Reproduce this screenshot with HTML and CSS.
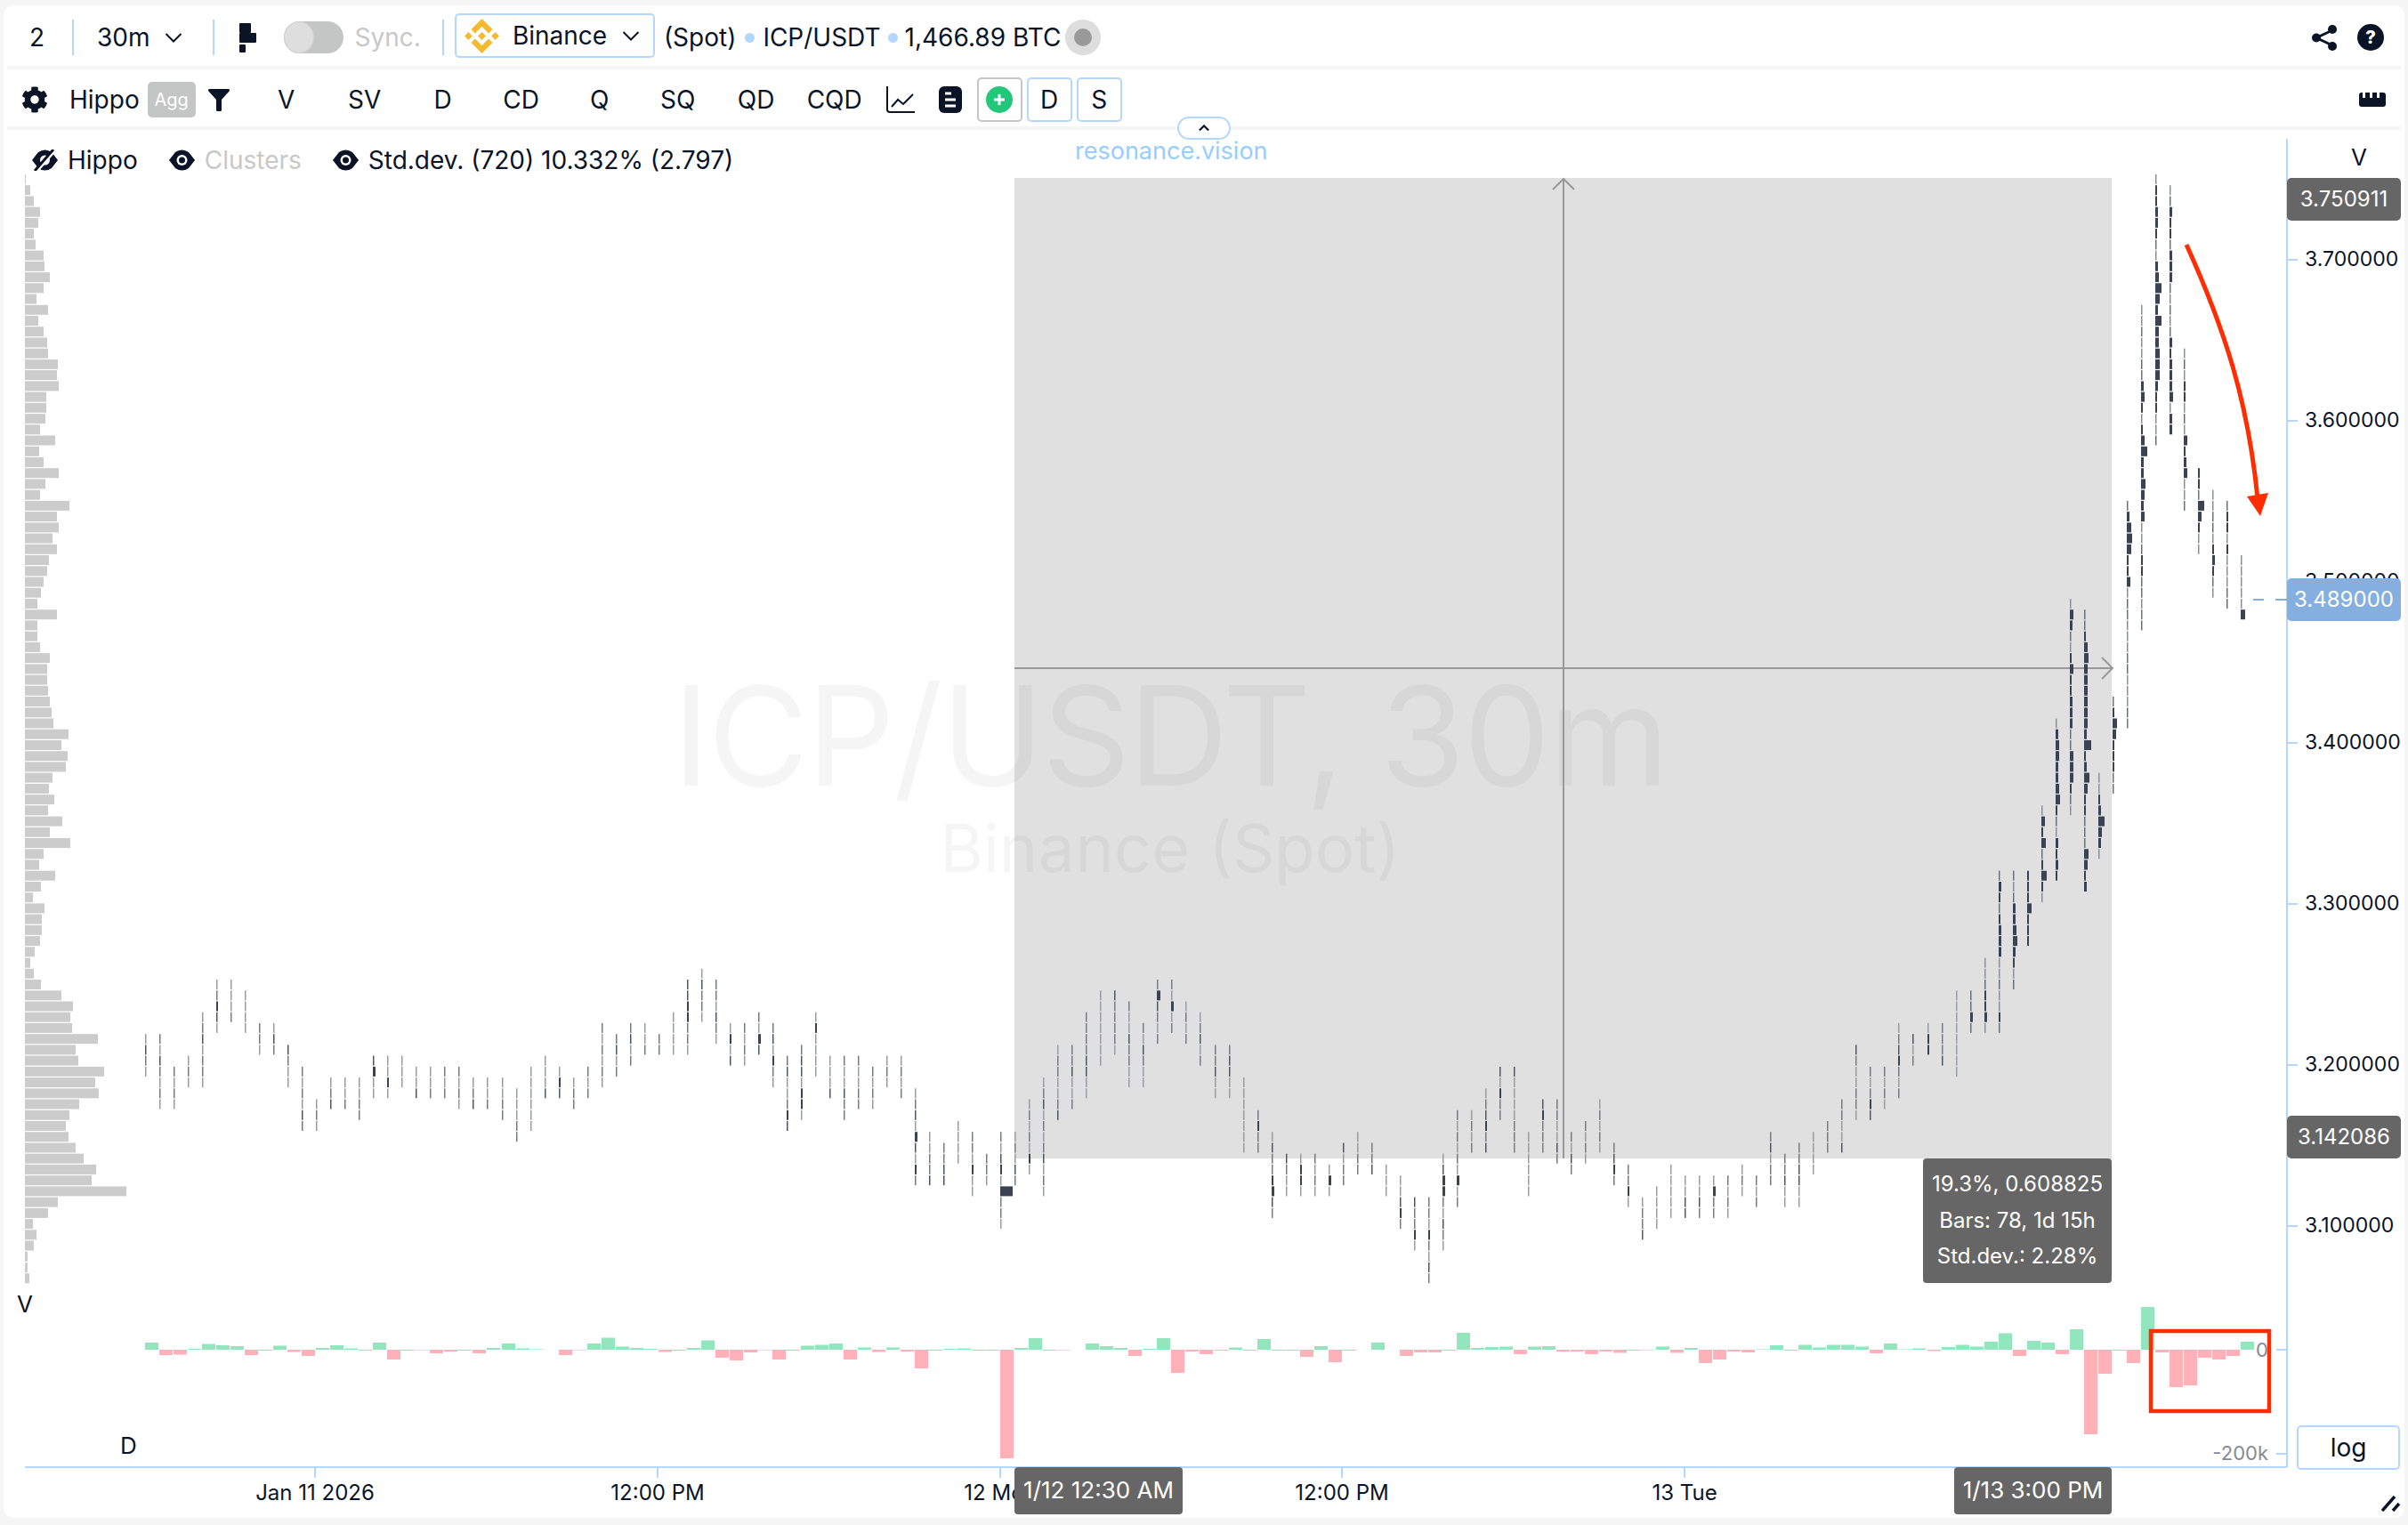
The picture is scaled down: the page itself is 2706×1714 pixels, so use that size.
FILE: index.html
```html
<!DOCTYPE html>
<html>
  <head>
    <meta charset="utf-8">
    <title>ICP/USDT</title>
    <link rel="stylesheet" href="styles.css">
  </head>
  <body>
  <main class="card">
    <section class="toolbar toolbar-top">
      <span class="count">2</span>
      <i class="divider divider-a"></i>
      <span class="interval">30m</span>
      <svg class="chevron" viewBox="0 0 19 11"><path d="M1 1l8.5 8.5L18 1"/></svg>
      <i class="divider divider-b"></i>
      <svg class="layout-icon" viewBox="0 0 19 33"><rect width="13" height="11" rx="1"/><rect y="11" width="19" height="11" rx="1"/><rect y="24" width="7" height="9" rx="1"/></svg>
      <span class="toggle"><i></i></span>
      <span class="sync">Sync.</span>
      <i class="divider divider-c"></i>
      <div class="exchange">
        <svg class="binance" viewBox="0 0 126.61 126.61"><path d="M38.73 53.2l24.59-24.58 24.6 24.6 14.3-14.31L63.32 0 24.43 38.9zM0 63.31l14.3-14.31 14.31 14.31-14.31 14.3zM38.73 73.41l24.59 24.59 24.6-24.6 14.31 14.29-38.9 38.91-38.91-38.88-.02-.02zM98 63.31l14.3-14.3 14.31 14.3-14.31 14.31zM77.83 63.3L63.32 48.78 52.59 59.51l-1.24 1.23-2.54 2.54 14.51 14.5 14.51-14.47z"/></svg>
        <span>Binance</span>
        <svg class="chevron" viewBox="0 0 19 11"><path d="M1 1l8.5 8.5L18 1"/></svg>
      </div>
      <span class="spot">(Spot)</span>
      <i class="dot dot-a"></i>
      <span class="pair">ICP/USDT</span>
      <i class="dot dot-b"></i>
      <span class="volume">1,466.89 BTC</span>
      <span class="status"><i></i></span>
      <svg class="share" viewBox="0 0 28 29"><path d="M23 6L5 14.500L23 23"/><circle cx="5" cy="14.500" r="5"/><circle cx="23" cy="5" r="5"/><circle cx="23" cy="24" r="5"/></svg>
      <span class="help">?</span>
    </section>

    <section class="toolbar toolbar-second">
      <svg class="gear" viewBox="0 0 512 512"><path d="M487.4 315.7l-42.6-24.6c4.3-23.2 4.3-47 0-70.2l42.6-24.6c4.9-2.8 7.1-8.6 5.5-14-11.1-35.6-30-67.8-54.7-94.6-3.8-4.1-10-5.1-14.8-2.3L380.8 110c-17.9-15.4-38.5-27.3-60.8-35.1V25.8c0-5.6-3.9-10.5-9.4-11.7-36.7-8.2-74.3-7.8-109.2 0-5.5 1.2-9.4 6.1-9.4 11.7V75c-22.2 7.9-42.8 19.8-60.8 35.1L88.7 85.5c-4.9-2.8-11-1.9-14.8 2.3-24.7 26.7-43.6 58.9-54.7 94.6-1.7 5.4.6 11.2 5.5 14L67.3 221c-4.3 23.2-4.3 47 0 70.2l-42.6 24.6c-4.9 2.8-7.1 8.6-5.5 14 11.1 35.6 30 67.8 54.7 94.6 3.8 4.1 10 5.1 14.8 2.3l42.6-24.6c17.9 15.4 38.5 27.3 60.8 35.1v49.2c0 5.6 3.9 10.5 9.4 11.7 36.7 8.2 74.3 7.8 109.2 0 5.5-1.2 9.4-6.1 9.4-11.7v-49.2c22.2-7.9 42.8-19.8 60.8-35.1l42.6 24.6c4.9 2.8 11 1.9 14.8-2.3 24.7-26.7 43.6-58.9 54.7-94.6 1.5-5.5-.7-11.3-5.6-14.1zM256 336c-44.1 0-80-35.9-80-80s35.9-80 80-80 80 35.9 80 80-35.9 80-80 80z"/></svg>
      <span class="indicator-name">Hippo</span>
      <span class="agg">Agg</span>
      <svg class="funnel" viewBox="0 0 24 25"><path d="M1.500 0h21c1.300 0 1.900 1.400 1.100 2.400L15 12v11.500c0 1-.7 1.500-1.500 1.500h-3c-.8 0-1.500-.5-1.500-1.500V12L.4 2.400C-.4 1.400.2 0 1.500 0z"/></svg>
      <div class="metrics">
        <span>V</span><span>SV</span><span>D</span><span>CD</span><span>Q</span><span>SQ</span><span>QD</span><span>CQD</span>
      </div>
      <svg class="line-icon" viewBox="0 0 32 30"><path d="M1 0v26c0 2 1 3 3 3h28"/><path d="M6 23l7-8 6 5 11-11"/></svg>
      <svg class="doc-icon" viewBox="0 0 26 30"><rect width="26" height="30" rx="6"/><path d="M7 8h7M7 15h12M7 22h12"/></svg>
      <span class="box box-add"><svg viewBox="0 0 30 30"><circle cx="15" cy="15" r="15"/><path d="M15 9v12M9 15h12"/></svg></span>
      <span class="box">D</span>
      <span class="box">S</span>
      <svg class="ruler" viewBox="0 0 30 16"><path d="M0 3c0-2 1-3 3-3h1v6h3V0h5v6h3V0h5v6h3V0h4c2 0 3 1 3 3v10c0 2-1 3-3 3H3c-2 0-3-1-3-3z"/></svg>
    </section>

    <button class="collapse" type="button"><svg viewBox="0 0 14 8"><path d="M1 7l6-6 6 6"/></svg></button>

    <section class="chart">
      <svg id="plot" class="plot" viewBox="4 146 2698 1560">
        <rect class="range" x="1140" y="200" width="1233" height="1102"/>
        <text class="mark mark-big" x="1315" y="883">ICP/USDT, 30m</text>
        <text class="mark mark-small" x="1315" y="980">Binance (Spot)</text>
        <path class="cross" d="M1757 1302V201M1745 213l12-12 12 12M1140 751h1234M2362 739l12 12-12 12"/>
        <g id="profile"></g>
        <g id="delta"></g>
        <g id="bars"></g>
        <g id="ticks"></g>
        <path class="axis" d="M2570 156V1649M28 1649H2570"/>
        <path class="last-line" d="M2532 674h12M2557 674h13"/>
        <path class="arrow-line" d="M2457 275C2500 370 2526 450 2537 560"/>
        <path class="arrow-head" d="M2525 558L2549 554L2540 580Z"/>
        <rect class="red-box" x="2417" y="1496" width="133" height="90"/>
      </svg>

      <div class="legend">
        <span class="legend-item">
          <svg class="eye" viewBox="0 0 29 24"><path d="M0 12L7 3Q14.500-2 22 3L29 12L22 21Q14.500 26 7 21z"/><circle class="eye-white" cx="14.500" cy="12" r="5.500"/><path class="eye-slash" d="M5 25L26 1"/><path class="eye-slash-dark" d="M3 24L24 0"/></svg>
          Hippo
        </span>
        <span class="legend-item legend-off">
          <svg class="eye" viewBox="0 0 29 24"><path d="M0 12L7 3Q14.500-2 22 3L29 12L22 21Q14.500 26 7 21z"/><circle class="eye-white" cx="14.500" cy="12" r="6"/><circle cx="14.500" cy="12" r="3.500"/></svg>
          <b>Clusters</b>
        </span>
        <span class="legend-item">
          <svg class="eye" viewBox="0 0 29 24"><path d="M0 12L7 3Q14.500-2 22 3L29 12L22 21Q14.500 26 7 21z"/><circle class="eye-white" cx="14.500" cy="12" r="6"/><circle cx="14.500" cy="12" r="3.500"/></svg>
          Std.dev. (720) 10.332% (2.797)
        </span>
      </div>

      <a class="brand">resonance.vision</a>
      <span class="axis-title axis-v">V</span>
      <span class="axis-title axis-profile">V</span>
      <span class="axis-title axis-delta">D</span>

      <span class="price-tag tag-high">3.750911</span>
      <span class="price-tag tag-last">3.489000</span>
      <span class="price-tag tag-low">3.142086</span>

      <div class="range-info">
        <span>19.3%, 0.608825</span>
        <span>Bars: 78, 1d 15h</span>
        <span>Std.dev.: 2.28%</span>
      </div>

      <span class="time-tag time-from">1/12 12:30 AM</span>
      <span class="time-tag time-to">1/13 3:00 PM</span>

      <button class="log" type="button">log</button>
      <svg class="resize" viewBox="0 0 21 18"><path d="M1 17L15 1M13 17l7-8"/></svg>
    </section>
  </main>
  <script src="chart.js"></script>
  </body>
</html>
```

FILE: styles.css
```css
* {
  box-sizing: border-box;
}
html, body {
  margin: 0;
  height: 100%;
  background-color: #f5f5f5;
}
body {
  font-family: Inter, "Liberation Sans", sans-serif;
  color: #0a1426;
  padding: 6px 4px 8px;
}
svg {
  display: block;
}
i {
  display: block;
}
.card {
  position: relative;
  height: 1700px;
  background-color: #fff;
  border-radius: 12px;
  overflow: hidden;
  display: flex;
  flex-direction: column;
}

/* toolbars */
.toolbar {
  display: flex;
  align-items: center;
  margin: 0 4px;
  padding-top: 4px;
  font-size: 28px;
  border-bottom: 4px solid #f5f5f5;
  white-space: nowrap;
}
.toolbar-top {
  height: 72px;
}
.toolbar-second {
  height: 68px;
}
.divider {
  width: 2px;
  height: 40px;
  background-color: #b3d7ff;
}
.count { margin-left: 25px; }
.divider-a { margin-left: 31px; }
.interval { margin-left: 26px; }
.chevron {
  width: 20px;
  height: 11px;
  margin-left: 16px;
  fill: none;
  stroke: #0a1426;
  stroke-width: 2;
}
.divider-b { margin-left: 34px; }
.layout-icon {
  width: 19px;
  height: 33px;
  margin-left: 28px;
  fill: #0a1426;
}
.toggle {
  width: 67px;
  height: 36px;
  margin-left: 31px;
  border-radius: 18px;
  background-color: #c4c6c6;
}
.toggle i {
  width: 34px;
  height: 36px;
  border-radius: 50%;
  background-color: #dedede;
  border: 1px solid #d0d0d0;
}
.sync {
  margin-left: 13px;
  color: #c8c8c8;
}
.divider-c { margin-left: 24px; }
.exchange {
  width: 225px;
  height: 50px;
  margin: -4px 0 0 12px;
  padding: 0 15px 0 9px;
  display: flex;
  align-items: center;
  border: 2px solid #b3d7ff;
  border-radius: 5px;
}
.exchange span {
  margin-left: 15px;
}
.exchange .chevron {
  margin-left: auto;
}
.binance {
  width: 39px;
  height: 39px;
  fill: #f3ba2f;
}
.spot { margin-left: 10px; }
.dot {
  width: 11px;
  height: 11px;
  border-radius: 50%;
  background-color: #b3d7ff;
}
.dot-a { margin-left: 10px; }
.pair { margin-left: 9px; }
.dot-b { margin-left: 8px; }
.volume { margin-left: 8px; }
.status {
  width: 40px;
  height: 40px;
  margin-left: 5px;
  padding: 10px;
  border-radius: 50%;
  background-color: #dddddd;
}
.status i {
  width: 20px;
  height: 20px;
  border-radius: 50%;
  background-color: #999;
}
.share {
  width: 28px;
  height: 29px;
  margin-left: auto;
  fill: #0a1426;
  stroke: #0a1426;
  stroke-width: 0;
}
.share path {
  fill: none;
  stroke-width: 3;
}
.help {
  width: 30px;
  height: 30px;
  margin: 0 19px 0 23px;
  border-radius: 50%;
  background-color: #0a1426;
  color: #fff;
  font-size: 20px;
  font-weight: 800;
  line-height: 30px;
  text-align: center;
}
.gear {
  width: 30px;
  height: 30px;
  margin-left: 16px;
  fill: #0a1426;
}
.indicator-name { margin-left: 24px; }
.agg {
  width: 54px;
  height: 40px;
  margin-left: 9px;
  background-color: #c4c6c6;
  border-radius: 5px;
  color: #fff;
  font-size: 20px;
  line-height: 40px;
  text-align: center;
}
.funnel {
  width: 24px;
  height: 25px;
  margin-left: 14px;
  fill: #0a1426;
}
.metrics {
  display: flex;
  margin-left: 20px;
}
.metrics span {
  width: 88px;
  text-align: center;
}
.line-icon {
  width: 32px;
  height: 30px;
  margin-left: 14px;
  fill: none;
  stroke: #0a1426;
  stroke-width: 2;
}
.doc-icon {
  width: 26px;
  height: 30px;
  margin-left: 27px;
  fill: #0a1426;
}
.doc-icon path {
  fill: none;
  stroke: #fff;
  stroke-width: 3;
}
.box {
  width: 51px;
  height: 50px;
  margin-left: 5px;
  border: 2px solid #b3d7ff;
  border-radius: 5px;
  display: flex;
  align-items: center;
  justify-content: center;
}
.box-add {
  margin-left: 17px;
  border-color: #c4c6c6;
}
.box-add svg {
  width: 30px;
  height: 30px;
  fill: #22c77a;
}
.box-add path {
  fill: none;
  stroke: #fff;
  stroke-width: 3;
}
.ruler {
  width: 30px;
  height: 16px;
  margin: 0 17px 0 auto;
  fill: #0a1426;
}
.collapse {
  position: absolute;
  left: 1319px;
  top: 125px;
  width: 60px;
  height: 26px;
  padding: 0;
  border: 2px solid #b3d7ff;
  border-radius: 13px;
  background-color: #fff;
  z-index: 2;
}
.collapse svg {
  width: 12px;
  height: 8px;
  margin: 0 auto;
  fill: none;
  stroke: #0a1426;
  stroke-width: 2.500;
}

/* chart */
.chart {
  position: relative;
  flex: 1;
}
.plot {
  position: absolute;
  left: 0;
  top: 0;
  width: 2698px;
  height: 1560px;
}
.range { fill: #e0e0e0; }
.mark {
  text-anchor: middle;
  fill: rgba(0, 0, 0, 0.04);
}
.mark-big { font-size: 155px; letter-spacing: -2px; }
.mark-small { font-size: 74px; }
.cross {
  fill: none;
  stroke: #999;
  stroke-width: 2;
}
.axis {
  fill: none;
  stroke: #b3d7ff;
  stroke-width: 2;
}
.tick {
  stroke: #b3d7ff;
  stroke-width: 2;
}
.price-label { font-size: 23px; fill: #0a1426; }
.time-label { font-size: 24px; fill: #0a1426; text-anchor: middle; }
.delta-label { font-size: 22px; fill: #868a92; text-anchor: end; }
.last-line {
  fill: none;
  stroke: #84afde;
  stroke-width: 2;
}
.arrow-line {
  fill: none;
  stroke: #ff2d00;
  stroke-width: 5;
}
.arrow-head { fill: #ff2d00; }
.red-box {
  fill: none;
  stroke: #ff2d00;
  stroke-width: 4.500;
}
.legend {
  position: absolute;
  left: 32px;
  top: 17px;
  display: flex;
  gap: 35px;
  font-size: 28px;
  white-space: nowrap;
}
.legend-item {
  display: flex;
  align-items: center;
  gap: 11px;
}
.legend-off b {
  font-weight: 400;
  color: #c8c8c8;
}
.eye {
  width: 29px;
  height: 24px;
  fill: #0a1426;
}
.eye-white { fill: #fff; }
.eye-slash {
  stroke: #fff;
  stroke-width: 3;
}
.eye-slash-dark {
  stroke: #0a1426;
  stroke-width: 3;
}
.brand {
  position: absolute;
  left: 1204px;
  top: 7px;
  color: #99ccff;
  font-size: 27px;
}
.axis-title {
  position: absolute;
  font-size: 26px;
  line-height: 30px;
}
.axis-v { left: 2638px; top: 16px; }
.axis-profile { left: 15px; top: 1305px; }
.axis-delta { left: 131px; top: 1464px; }
.price-tag {
  position: absolute;
  left: 2566px;
  width: 128px;
  height: 48px;
  background-color: #666;
  color: #fff;
  border-radius: 5px;
  font-size: 24px;
  line-height: 48px;
  text-align: center;
}
.tag-high { top: 54px; }
.tag-last {
  top: 504px;
  background-color: #84afde;
}
.tag-low {
  top: 1108px;
}
.range-info {
  position: absolute;
  left: 2157px;
  top: 1156px;
  width: 212px;
  height: 140px;
  padding-top: 9px;
  background-color: #666;
  border-radius: 4px;
  color: #fff;
  font-size: 24px;
  line-height: 40.500px;
  text-align: center;
}
.range-info span {
  display: block;
}
.time-tag {
  position: absolute;
  top: 1503px;
  height: 53px;
  background-color: #666;
  border-radius: 4px;
  color: #fff;
  font-size: 26px;
  line-height: 51px;
  text-align: center;
}
.time-from { left: 1136px; width: 189px; }
.time-to { left: 2192px; width: 177px; }
.log {
  position: absolute;
  left: 2577px;
  top: 1456px;
  width: 116px;
  height: 50px;
  padding: 0;
  border: 2px solid #b3d7ff;
  border-radius: 5px;
  background-color: #fff;
  color: #0a1426;
  font-family: inherit;
  font-size: 28px;
}
.resize {
  position: absolute;
  left: 2672px;
  top: 1535px;
  width: 21px;
  height: 18px;
  fill: none;
  stroke: #0a1426;
  stroke-width: 3.500;
}
```

FILE: chart.js
```js
// Plot coordinates are the page's own, the svg viewBox takes care of the offset.
var ROW_TOP = 196;
var ROW_H = 12.23;
var COL_LEFT = 163;
var COL_W = 16.02;
var ZERO_Y = 1517;
var SVG_NS = 'http://www.w3.org/2000/svg';

// [first row, row after the last] for every bar
var bars = [
  [79,83],[79,86],[82,86],[81,84],[77,84],[74,79],[74,78],[75,79],[78,81],[78,81],[80,84],[82,88],[85,88],[83,86],[83,86],[83,87],[81,85],
  [81,85],[81,84],[82,85],[82,85],[82,85],[82,86],[83,86],[83,86],[83,87],[84,89],[82,88],[81,85],[82,85],[83,86],[82,85],[78,84],[79,83],
  [78,82],[78,81],[79,81],[77,81],[74,81],[73,78],[74,80],[78,82],[78,82],[77,81],[78,84],[81,88],[80,87],[77,83],[81,85],[81,87],[81,86],
  [82,86],[81,84],[81,85],[84,93],[88,93],[89,93],[87,91],[88,94],[90,93],[88,97],[88,93],[85,92],[83,94],[80,87],[80,86],[77,85],[75,82],
  [75,81],[76,84],[78,84],[74,80],[74,79],[76,80],[77,82],[80,85],[80,85],[83,90],
  [86,90],[88,96],[90,94],[90,94],[90,94],[91,94],[89,93],[88,92],[89,92],[91,94],[92,97],[94,99],[94,102],[90,99],[86,95],[86,90],[84,90],
  [82,87],[82,90],[88,94],[85,90],[85,91],[88,92],[87,91],[85,90],[89,93],[91,95],[94,98],[93,97],[91,96],[92,96],[92,96],[92,96],[92,96],
  [91,94],[92,95],[88,93],[90,95],[89,95],[88,92],[87,90],[85,90],[80,87],[82,87],[82,86],[78,85],
  [79,82],[78,81],[78,82],[75,83],[75,79],[72,79],[64,79],[64,75],[64,71],[58,67],[50,65],[39,59],[40,66],[55,63],[48,57],[30,51],[12,42],
  [0,25],[1,24],[16,31],[27,35],[29,39],[30,40],[35,41]
];

// Cell widths for the busy bars, from the top row down. Key is the bar index.
var wideBars = {
  130: [1,3,2,1,2,3,3,3,1,1,1,1,1,2],
  131: [1,1,1,3,3,4,5,3,2,1,1],
  132: [2,2,2,5,2,2,2],
  133: [1,4,2,5,1,2,6,2,1],
  134: [1,3,4,4,3,3,4,5,2,1,1,3,2,3,2],
  135: [1,4,3,1,1,2,4,2,2,3,3,3,1,1,4,4,4,2,1,1],
  136: [1,1,2,4,5,4,4,4,4,4,4,3,8,2,3,6,4,2,2,1,1,1,5,4,2,3],
  137: [1,1,2,3,7,4,3,1],
  138: [1,2,5,4,2,2,2,1,1],
  139: [1,3,5,6,5,2,2,4,1],
  140: [1,1,1,1,1,1,1,3,4,2,1,2,4,7,3,3,5,4,3,4,1,1,1,2,2,1],
  141: [1,2,2,3,3,2,1,1,3,4,7,5,3,7,4,4,5,5,5,3,2,2,1,1,1],
  142: [1,1,3,2,2,1,3,3,3,1,1,1,1,1,3,2,3,3,3,4,1,3,3,1],
  143: [1,1,1,2,2,1,1,1,4,2,3,4,1,1,1],
  144: [2,2,1,7,4,2,1,1],
  145: [1,1,1,1,1,2,3,2,1,1],
  146: [1,2,2,1,2,1,1,1,1,1],
  147: [1,1,1,1,1,5]
};

// A few thicker cells in the quiet part: bar index, row, width
var thickCells = [
  [5,76,2],[16,82,3],[17,83,2],[29,83,2],[38,76,2],[38,77,2],[44,81,2],[45,86,2],[46,84,2],[46,85,2],[47,78,2],[41,79,2],[43,79,3],
  [54,88,3],[54,91,2],[58,91,2],[60,91,2],[62,90,2],[71,75,4],[72,76,3],[78,87,2],[79,92,2],[79,93,3],[81,91,2],[81,92,2],[83,92,3],
  [88,95,2],[89,97,2],[90,97,2],[91,92,3],[91,93,3],[92,92,3],[94,87,2],[95,84,2],[98,86,2],[103,91,2],[104,93,2],[110,93,3],[121,85,2],
  [123,81,2],[125,79,2],[125,80,2],[128,77,3],[129,75,2],[129,76,2],[129,77,3]
];

// Delta histogram heights, one per bar, positive is up
var delta = [
  8,-6,-5.5,1,6.5,5,4,-6,-1,4.5,-2.5,-7,2,5,1.5,-1,8,-11,-1,-.5,-4,-2,-1,-4,2,7,1.5,.5,0,-6,-.5,7,13.5,3.5,
  2,1,-2.5,-1,2,10.5,-9,-12,-3,-.5,-11,-1,4.5,5.5,7,-11,2.5,-2.5,2.5,-2,-21,-1,1,1.5,-1,-1,-122,2,13,-1,-.5,0,7,4,2,-7,1,13,-26,-2,-5,-1,2.5,-1,
  12,-1,-1,-8,4,-14,-1,0,8,0,-7,-3,-3,-1,19,2,3,3.5,-5,3.5,4,-2,-2,-5,-2,-3.5,-1,-.5,3.5,-3.5,2,-15,-11,-2,-3,.5,5,-1,5.5,2.5,5.5,5.5,3.5,-4,7,.5,
  1.5,-1.5,3,5.5,3.5,9,18.5,-7,10,8,-5,23,-95,-27,-1,-15,48,-3,-42,-40,-9,-11,-7,9
];

// Volume profile width per row
var profile = [
  1,6,10,17,15,10,12,21,22,28,21,13,26,15,21,25,26,37,36,38,24,24,23,17,34,16,21,38,23,17,50,36,38,31,36,27,
  25,21,18,14,36,14,14,17,28,25,25,26,28,30,32,49,41,48,46,31,27,33,26,42,28,51,21,16,34,18,9,22,19,19,
  17,11,6,10,18,41,54,51,53,82,57,60,89,79,83,61,50,46,49,57,66,80,75,114,37,26,9,13,10,3,3,5
];

var prices = ['3.700000', '3.600000', '3.500000', '3.400000', '3.300000', '3.200000', '3.100000'];
var times = [['Jan 11 2026', 354], ['12:00 PM', 739], ['12 Mon', 1124], ['12:00 PM', 1508], ['13 Tue', 1893]];

var $bars = document.querySelector('#bars');
var $delta = document.querySelector('#delta');
var $profile = document.querySelector('#profile');
var $ticks = document.querySelector('#ticks');

// Helper functions
function add($parent, name, attrs, text) {
  var $el = document.createElementNS(SVG_NS, name);
  Object.keys(attrs).forEach(function(key) {
    $el.setAttribute(key, attrs[key]);
  });
  if (text) {
    $el.textContent = text;
  }
  $parent.appendChild($el);
  return $el;
}
function colX(i) {
  return Math.round(COL_LEFT + i * COL_W);
}
function rowY(r) {
  return ROW_TOP + r * ROW_H;
}
// Same shade on every run
function shade(i, r) {
  var n = (i * 7 + r * 13 + i * r) % 10;
  if (i >= 128) {
    return n < 5 ? '#6a707c' : '#8b8f98';
  }
  return n < 2 ? '#4e5563' : n < 6 ? '#767b86' : '#989ca4';
}

var thick = {};
thickCells.forEach(function(c) {
  thick[c[0] + ':' + c[1]] = c[2];
});

bars.forEach(function(bar, i) {
  for (var r = bar[0]; r < bar[1]; r += 1) {
    var w = thick[i + ':' + r] || 1;
    if (wideBars[i]) {
      w = wideBars[i][r - bar[0]] || 1;
    }
    add($bars, 'rect', {
      x: colX(i),
      y: rowY(r).toFixed(1),
      width: w === 1 ? 1.5 : w,
      height: 11,
      fill: w > 1 ? '#3b4352' : shade(i, r)
    });
  }
});

// The big cell at the bottom of the January 12 bar
add($bars, 'rect', {x: colX(60), y: rowY(93).toFixed(1), width: 14, height: 11, fill: '#3b4352'});

delta.forEach(function(v, i) {
  add($delta, 'rect', {
    x: colX(i),
    y: v > 0 ? ZERO_Y - v : ZERO_Y,
    width: 15,
    height: Math.abs(v),
    fill: v > 0 ? '#92e5bc' : '#ffb1b9'
  });
});

profile.forEach(function(w, r) {
  add($profile, 'rect', {x: 28, y: rowY(r).toFixed(1), width: w, height: 11, fill: '#cccccc'});
});

prices.forEach(function(label, n) {
  var y = 292 + n * 181;
  add($ticks, 'line', {'class': 'tick', x1: 2570, x2: 2582, y1: y, y2: y});
  add($ticks, 'text', {'class': 'price-label', x: 2590, y: y + 7}, label);
});
times.forEach(function(t) {
  add($ticks, 'line', {'class': 'tick', x1: t[1], x2: t[1], y1: 1649, y2: 1661});
  add($ticks, 'text', {'class': 'time-label', x: t[1], y: 1686}, t[0]);
});
add($ticks, 'line', {'class': 'tick', x1: 2558, x2: 2570, y1: 1517, y2: 1517});
add($ticks, 'line', {'class': 'tick', x1: 2558, x2: 2570, y1: 1634, y2: 1634});
add($ticks, 'text', {'class': 'delta-label', x: 2549, y: 1525}, '0');
add($ticks, 'text', {'class': 'delta-label', x: 2549, y: 1641}, '-200k');
```
